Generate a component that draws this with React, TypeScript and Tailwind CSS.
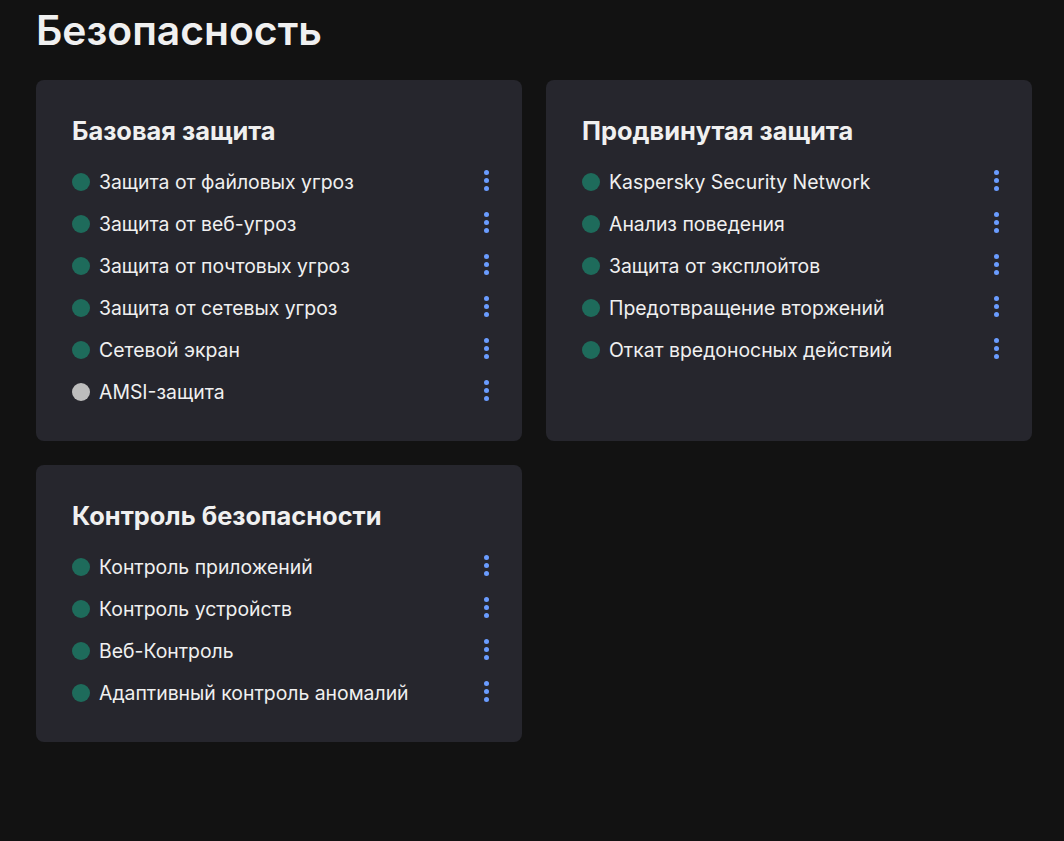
import React from "react";

type Item = { label: string; on: boolean };

const Kebab = () => (
  <div className="mb-1 flex w-6 flex-col items-center gap-[3px]">
    <span className="h-[5px] w-[5px] rounded-full bg-[#6a9cff]" />
    <span className="h-[5px] w-[5px] rounded-full bg-[#6a9cff]" />
    <span className="h-[5px] w-[5px] rounded-full bg-[#6a9cff]" />
  </div>
);

const Card = ({ title, items }: { title: string; items: Item[] }) => (
  <div className="rounded-lg bg-[#26262d] pl-9 pr-6 pt-9 pb-[37px]">
    <h2 className="mb-[22px] h-8 text-[25.4px] font-bold leading-[30px] text-[#f0f0f0]">{title}</h2>
    <div className="flex flex-col gap-[18px]">
      {items.map((it) => (
        <div key={it.label} className="flex h-6 items-center">
          <span
            className={
              it.on
                ? "h-[18px] w-[18px] shrink-0 rounded-full bg-[#1e6b5b]"
                : "h-[18px] w-[18px] shrink-0 rounded-full bg-[#bdbdbd]"
            }
          />
          <span className="ml-[9px] flex-1 text-[19.4px] leading-6 text-[#f0f0f0]">{it.label}</span>
          <Kebab />
        </div>
      ))}
    </div>
  </div>
);

export default function App() {
  return (
    <div
      className="min-h-[841px] bg-[#121212] pl-9 pr-8 pt-[6px]"
      style={{ fontFamily: "Inter, 'Noto Sans', sans-serif" }}
    >
      <h1 className="h-12 text-[40.8px] font-semibold leading-[48px] text-[#f0f0f0]">Безопасность</h1>
      <div className="mt-[26px] grid grid-cols-2 gap-6">
        <Card
          title="Базовая защита"
          items={[
            { label: "Защита от файловых угроз", on: true },
            { label: "Защита от веб-угроз", on: true },
            { label: "Защита от почтовых угроз", on: true },
            { label: "Защита от сетевых угроз", on: true },
            { label: "Сетевой экран", on: true },
            { label: "AMSI-защита", on: false },
          ]}
        />
        <Card
          title="Продвинутая защита"
          items={[
            { label: "Kaspersky Security Network", on: true },
            { label: "Анализ поведения", on: true },
            { label: "Защита от эксплойтов", on: true },
            { label: "Предотвращение вторжений", on: true },
            { label: "Откат вредоносных действий", on: true },
          ]}
        />
        <Card
          title="Контроль безопасности"
          items={[
            { label: "Контроль приложений", on: true },
            { label: "Контроль устройств", on: true },
            { label: "Веб-Контроль", on: true },
            { label: "Адаптивный контроль аномалий", on: true },
          ]}
        />
      </div>
    </div>
  );
}
